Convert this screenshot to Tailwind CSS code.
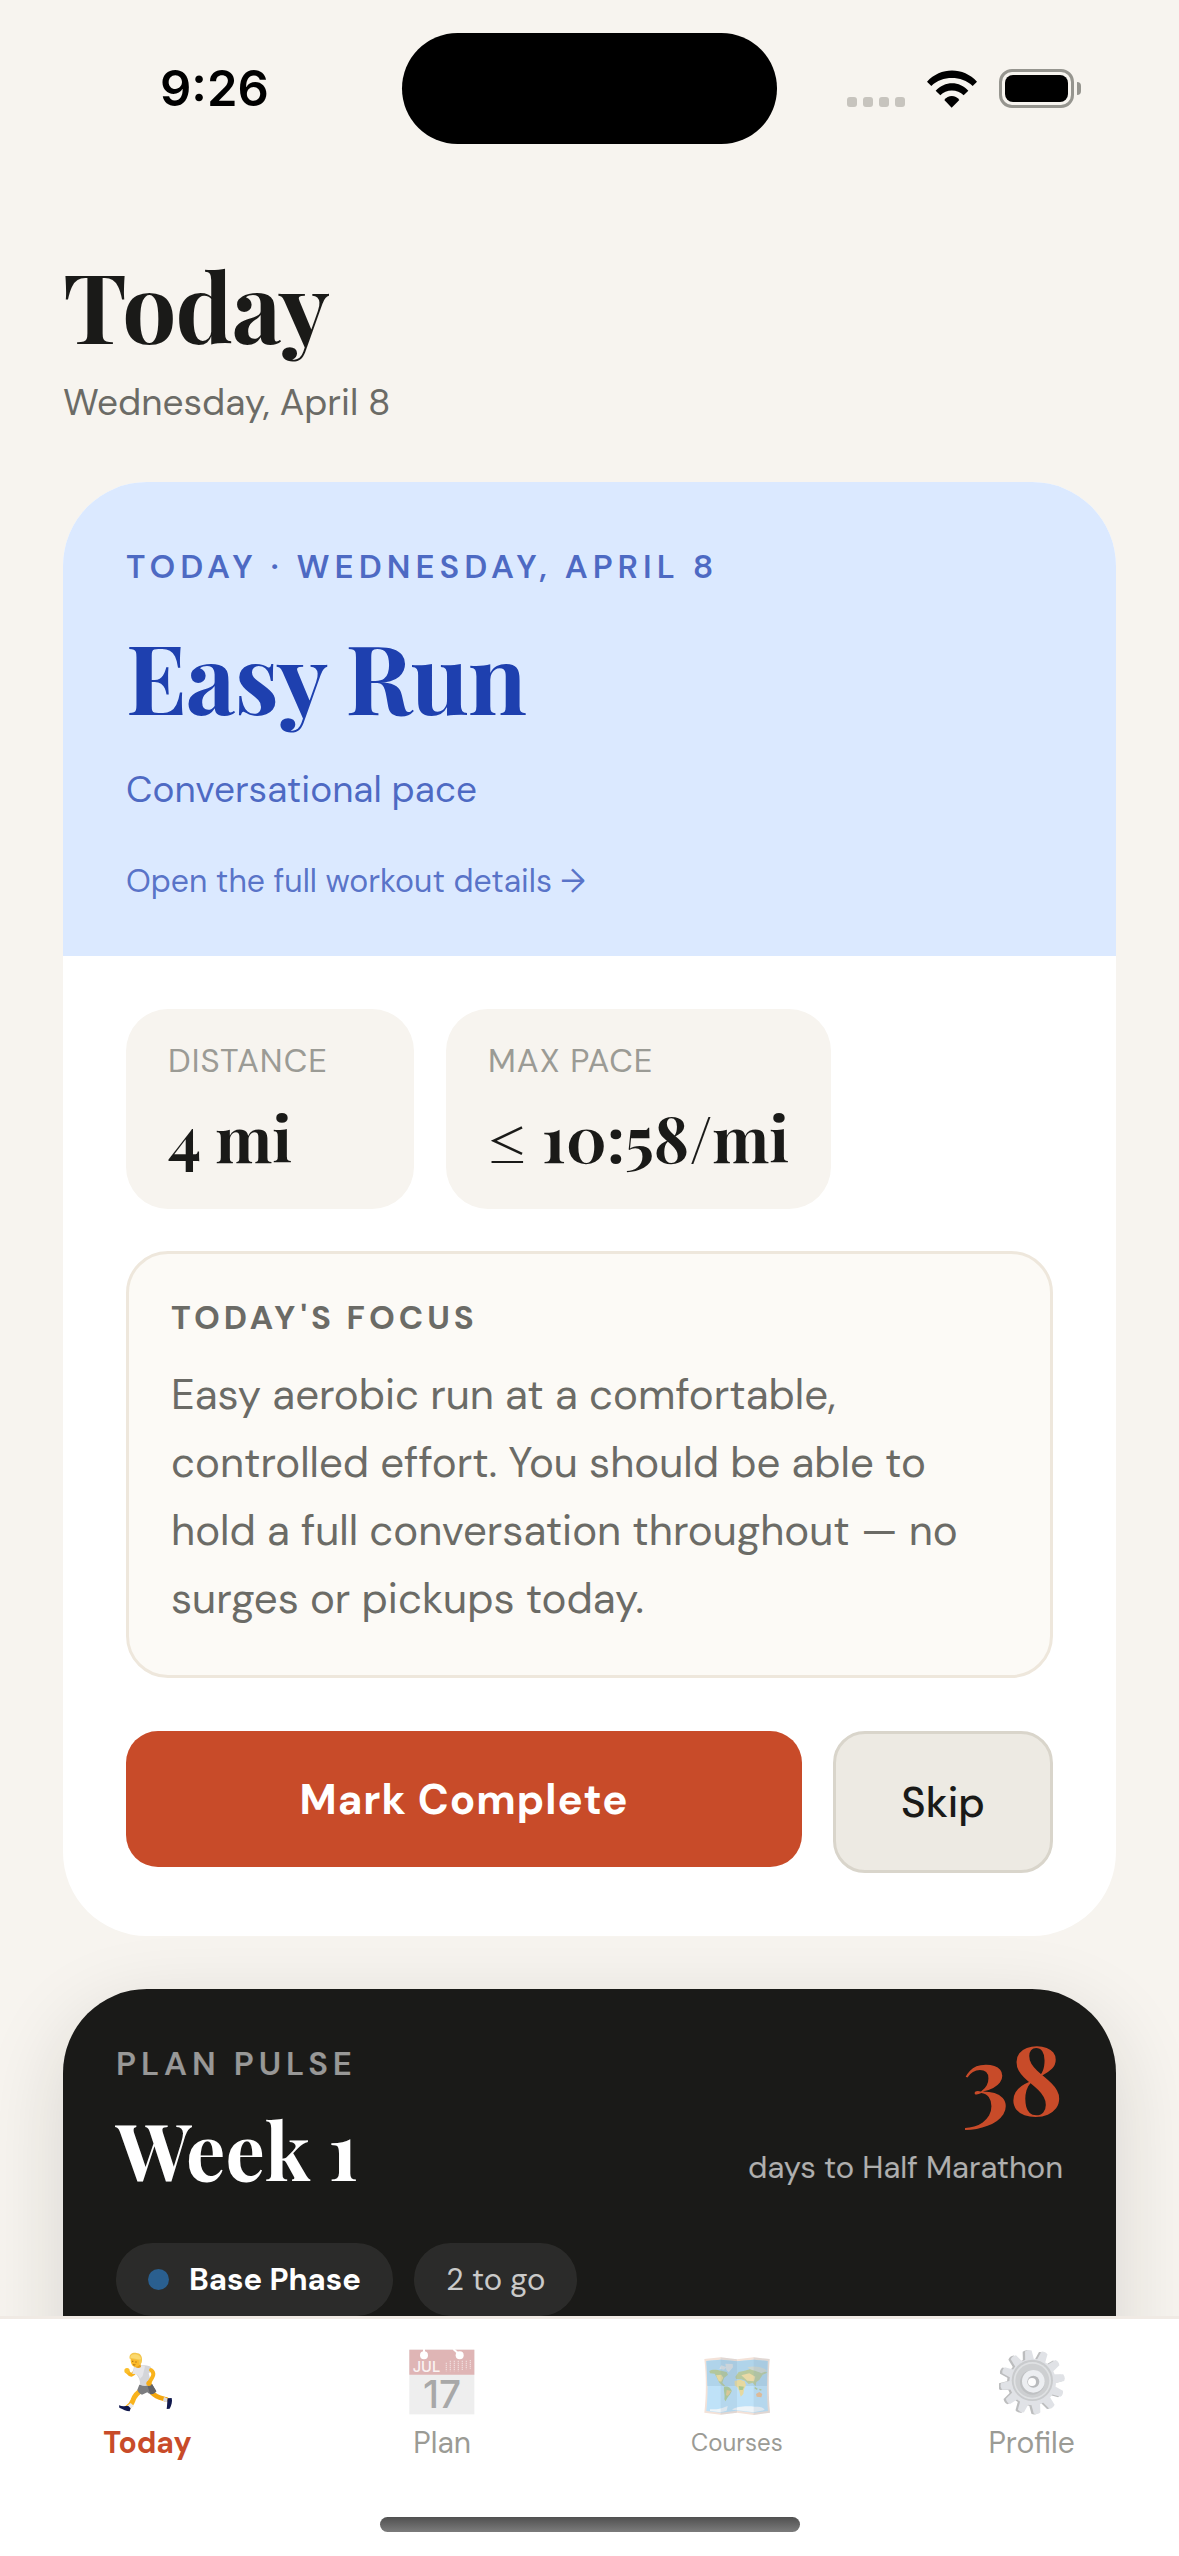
<!DOCTYPE html>
<html lang="en">
<head>
<meta charset="utf-8">
<meta name="viewport" content="width=device-width, initial-scale=1">
<title>Today</title>
<script src="https://cdn.jsdelivr.net/npm/@tailwindcss/browser@4"></script>
</head>
<body class="bg-[#f7f4ef] font-['DM_Sans','Lato',sans-serif] text-[#1a1a18]">
<div class="flex h-screen flex-col overflow-hidden">

  <!-- Status bar -->
  <header class="grid h-[177px] shrink-0 grid-cols-[1fr_375px_1fr] items-center text-black">
    <div class="pl-[160px] font-['Inter',sans-serif] text-[49px] leading-[60px] font-semibold">9:26</div>
    <div class="h-[111px] rounded-full bg-black"></div>
    <div class="flex items-center justify-end gap-[22px] pr-[98px]">
      <div class="flex h-[36px] items-end gap-[6px]">
        <span class="size-[10px] rounded-[3px] bg-[#c7c4be]"></span>
        <span class="size-[10px] rounded-[3px] bg-[#c7c4be]"></span>
        <span class="size-[10px] rounded-[3px] bg-[#c7c4be]"></span>
        <span class="size-[10px] rounded-[3px] bg-[#c7c4be]"></span>
      </div>
      <svg class="h-[38px] w-[50px]" viewBox="0 0 150 112" aria-hidden="true">
        <path d="M0 34C40-11 110-11 150 34L137 47C103 15 46 15 13 47Z"/>
        <path d="M26 61C53 31 98 31 124 61L110 75C92 56 57 56 40 75Z"/>
        <path d="M52 89C63 73 86 73 97 89L74 112Z"/>
      </svg>
      <div class="flex items-center gap-[3px]">
        <div class="h-[39px] w-[75px] rounded-[13px] border-3 border-[#96958f] p-[3px]">
          <div class="h-full rounded-[8px] bg-black"></div>
        </div>
        <div class="h-[13px] w-[4px] rounded-r-full bg-[#96958f]"></div>
      </div>
    </div>
  </header>

  <main class="min-h-0 flex-1 overflow-hidden px-[63px] pt-[64px]">
    <h1 class="font-['Playfair_Display','Liberation_Serif',serif] text-[96px] leading-[126px] font-bold tracking-[-1px]">Today</h1>
    <p class="mt-[10px] text-[37px] leading-[51px] text-[#6b6b66]">Wednesday, April 8</p>

    <!-- Workout card -->
    <section class="mt-[54px] overflow-hidden rounded-[84px] bg-white">
      <div class="bg-[#dbe9ff] px-[63px] pt-[63px] pb-[53px] text-[#1e40af]">
        <p class="text-[33px] leading-[43px] font-semibold tracking-[5px] text-[#1e40af]/75">TODAY · WEDNESDAY, APRIL 8</p>
        <h2 class="mt-[24px] font-['Playfair_Display','Liberation_Serif',serif] text-[96px] leading-[126px] font-bold tracking-[-1px]">Easy Run</h2>
        <p class="mt-[26px] text-[37px] leading-[51px] text-[#1e40af]/75">Conversational pace</p>
        <a href="#workout" class="mt-[45px] block text-[32px] leading-[43px] text-[#1e40af]/70">Open the full workout details →</a>
      </div>
      <div class="px-[63px] pt-[53px] pb-[63px]">
        <dl class="flex gap-[32px]">
          <div class="min-w-[288px] rounded-[42px] bg-[#f7f4ef] px-[42px] py-[30px]">
            <dt class="text-[33px] leading-[44px] tracking-[1px] text-[#9b9b95]">DISTANCE</dt>
            <dd class="mt-[12px] font-['Playfair_Display','Liberation_Serif',serif] text-[63px] leading-[84px] font-bold">4 mi</dd>
          </div>
          <div class="rounded-[42px] bg-[#f7f4ef] px-[42px] py-[30px]">
            <dt class="text-[33px] leading-[44px] tracking-[1px] text-[#9b9b95]">MAX PACE</dt>
            <dd class="mt-[12px] font-['Playfair_Display','Liberation_Serif',serif] text-[63px] leading-[84px] font-bold">≤ 10:58/mi</dd>
          </div>
        </dl>
        <div class="mt-[42px] rounded-[42px] border-3 border-[#eee7dc] bg-[#fcfaf6] p-[42px]">
          <h3 class="text-[33px] leading-[43px] font-bold tracking-[4px] text-[#6b6b66]">TODAY'S FOCUS</h3>
          <p class="mt-[22px] text-[42px] leading-[68px] text-[#6b6b66]">Easy aerobic run at a comfortable,<br>controlled effort. You should be able to<br>hold a full conversation throughout — no<br>surges or pickups today.</p>
        </div>
        <div class="mt-[53px] flex items-start gap-[31px]">
          <button type="button" class="h-[136px] flex-1 rounded-[32px] bg-[#c84b29] text-[42px] font-bold tracking-[1px] text-white">Mark Complete</button>
          <button type="button" class="h-[142px] w-[220px] rounded-[32px] border-3 border-[#d9d5cb] bg-[#edeae3] text-[42px] font-medium">Skip</button>
        </div>
      </div>
    </section>

    <!-- Plan pulse card -->
    <section class="mt-[53px] rounded-[84px] bg-[#1a1a18] p-[53px] shadow-[0_24px_84px_rgba(26,26,24,0.14)]">
      <div class="flex justify-between">
        <div>
          <p class="text-[33px] leading-[43px] font-semibold tracking-[5px] text-white/55">PLAN PULSE</p>
          <h2 class="mt-[12px] font-['Playfair_Display','Liberation_Serif',serif] text-[78px] leading-[104px] font-bold text-white">Week 1</h2>
        </div>
        <div class="text-right">
          <p class="font-['Playfair_Display','Liberation_Serif',serif] text-[96px] leading-[68px] font-bold text-[#c84b29]">38</p>
          <p class="mt-[36px] text-[31px] leading-[43px] text-white/65">days to Half Marathon</p>
        </div>
      </div>
      <div class="mt-[42px] flex gap-[21px] text-[31px] leading-[43px]">
        <span class="flex items-center gap-[20px] rounded-full bg-white/8 px-[32px] py-[15px] font-bold text-white"><i class="size-[21px] rounded-full bg-[#2a5f8f]"></i>Base Phase</span>
        <span class="rounded-full bg-white/8 px-[32px] py-[15px] text-white/75">2 to go</span>
      </div>
      <div class="h-[240px]"></div>
    </section>
  </main>

  <!-- Tab bar -->
  <nav class="shrink-0 border-t-3 border-[#f0eae4] bg-white pt-[29px] pb-[24px]">
    <div class="grid grid-cols-4 text-[30px] leading-[39px] text-[#9b9b95]">
      <a href="#today" class="flex flex-col items-center gap-[7px] font-bold text-[#c84b29]" aria-current="page">
        <svg class="h-[68px] w-[66px]" viewBox="162 114 198 204" aria-hidden="true">
          <path d="M246 240C228 250 222 262 219 271C214 284 210 288 202 293" fill="none" stroke="#f9b31c" stroke-width="15" stroke-linecap="round"/>
          <path d="M276 248C288 262 300 263 319 268" fill="none" stroke="#f4a70f" stroke-width="14" stroke-linecap="round"/>
          <path d="M212 279L222 288L210 296L202 287Z" fill="#e9e9ec"/>
          <path d="M312 261L324 266L320 277L309 272Z" fill="#dcdce0"/>
          <path d="M177 286C186 290 197 288 205 288L212 295L209 304C199 304 190 298 178 293Z" fill="#11194d"/>
          <path d="M323 265L335 264C338 274 334 287 329 296L320 297C322 287 321 276 323 265Z" fill="#11194d"/>
          <path d="M238 224L276 222L289 244C280 254 268 254 262 247L246 254C238 250 233 244 232 239Z" fill="#7c7d80"/>
          <path d="M262 225L276 222L289 244C283 251 277 254 270 252Z" fill="#626367"/>
          <path d="M226 184C218 195 213 199 203 186" fill="none" stroke="#f9b31c" stroke-width="12" stroke-linecap="round" stroke-linejoin="round"/>
          <circle cx="201" cy="182" r="8" fill="#fbbf2b"/>
          <path d="M222 171C236 164 258 164 272 170L276 184L266 190L274 223C262 229 250 229 240 224C241 211 236 201 229 193L217 191Z" fill="#d4d5d9"/>
          <path d="M224 172C236 166 247 167 255 169L248 198L240 206C237 199 233 195 229 192L217 191Z" fill="#e6e6ea"/>
          <path d="M273 180C286 190 279 200 268 217" fill="none" stroke="#f9b31c" stroke-width="12" stroke-linecap="round"/>
          <circle cx="267" cy="220" r="8" fill="#f6ac16"/>
          <path d="M224 158L241 158L243 171C236 176 228 174 223 169Z" fill="#e89c13"/>
          <path d="M212 143C211 158 215 169 226 171C237 171 243 162 244 147L232 138Z" fill="#fbb928"/>
          <path d="M209 146C206 133 218 127 229 129C241 129 248 139 246 153C245 162 240 165 237 164L236 150C228 150 218 147 209 146Z" fill="#f3c64c"/>
          <path d="M211 143C211 134 221 131 232 134C239 136 243 141 243 148C234 149 222 145 211 143Z" fill="#fbd96f"/>
          <path d="M216 154h4M226 156h4M219 164q4 2 7 0" stroke="#77430b" stroke-width="2" fill="none"/>
        </svg>
        <span>Today</span>
      </a>
      <a href="#plan" class="flex flex-col items-center gap-[7px]">
        <svg class="h-[68px] w-[66px]" viewBox="117 114 198 204" aria-hidden="true">
          <rect x="118" y="119" width="195" height="194" fill="#eeeeee"/>
          <path d="M118 119H313V194H118Z" fill="#dfb5b5"/>
          <circle cx="162" cy="136" r="12" fill="#fff"/><circle cx="269" cy="136" r="12" fill="#fff"/>
          <path d="M162 117V134M250 117L269 134" stroke="#fff" stroke-width="6"/>
          <text x="128" y="185" font-family="Inter, sans-serif" font-size="44" font-weight="500" fill="#faf3f3">JUL</text>
          <path d="M229 158V184M241 152V184M253 152V184M265 152V184M277 152V180M289 152V178M301 150V176" stroke="#efd9d9" stroke-width="4" stroke-dasharray="4 2"/>
          <text x="216" y="294" text-anchor="middle" font-family="Inter, sans-serif" font-size="116" font-weight="500" fill="#a8a8a8">17</text>
        </svg>
        <span>Plan</span>
      </a>
      <a href="#courses" class="flex flex-col items-center gap-[7px]">
        <svg class="h-[68px] w-[66px]" viewBox="132 114 198 204" aria-hidden="true">
          <path d="M133 147L182 142L231 148L281 142L329 147C325 200 325 260 330 308L281 315L231 308L182 314L133 308C139 255 139 200 133 147Z" fill="#f3e2d8"/>
          <path d="M139 153L182 149L231 154L281 149L323 153C320 200 320 260 324 303L281 308L231 302L182 308L139 303C144 255 144 200 139 153Z" fill="#bfe2f8"/>
          <path d="M139 153L182 149L231 154L281 149L323 153L321 228H142Z" fill="#b0d4ea"/>
          <path d="M148 183C158 176 172 180 184 182L200 186L204 194L192 204L187 218L196 228L190 229L178 218L170 202L164 191L150 190Z" fill="#b3c79c"/>
          <path d="M168 196L184 194L190 203L184 215L176 213Z" fill="#e6d9a0"/>
          <path d="M184 166L200 172L192 179L178 176ZM196 161L218 162L219 172L206 187L199 180Z" fill="#d9dfe2"/>
          <path d="M192 231C201 227 214 234 215 243C212 254 202 260 197 274L193 268C196 254 190 244 192 231Z" fill="#b0cc95"/>
          <path d="M200 240L214 243L204 257L198 256Z" fill="#e9cf90"/>
          <path d="M226 200L236 186L254 182L274 176L304 178L322 188L308 194L298 210L289 216L287 229L278 218L266 222L256 212L244 208L228 207Z" fill="#b8c99e"/>
          <path d="M244 196L268 190L286 200L282 214L262 212Z" fill="#ead9a6"/>
          <path d="M262 172C282 166 308 170 321 182L304 190C290 182 272 182 262 172Z" fill="#cdd6d0"/>
          <path d="M224 213L240 209L254 214L258 226L252 238L250 252L242 260L238 244L232 232L224 226Z" fill="#e6d9a0"/>
          <path d="M236 228L252 230L248 240L238 240Z" fill="#acc88f"/>
          <path d="M288 252L298 246L307 252L304 262L290 260Z" fill="#eebf92"/>
          <path d="M284 233L292 238M298 238L304 240" stroke="#b0cc95" stroke-width="4"/>
          <path d="M150 298C168 298 180 298 203 288L200 302L182 307L150 303ZM216 299C230 288 262 288 284 290C304 290 310 292 314 300L281 307L231 301Z" fill="#eef5f9"/>
          <path d="M182 142L231 148V308L182 314ZM281 142L329 147C325 200 325 260 330 308L281 315Z" fill="#8aa9bd" opacity=".18"/>
        </svg>
        <span class="text-[24px]">Courses</span>
      </a>
      <a href="#profile" class="flex flex-col items-center gap-[7px]">
        <svg class="h-[68px] w-[66px]" viewBox="146 114 198 204" aria-hidden="true">
          <defs>
            <g id="teeth">
              <path id="tooth" d="M231 156L235 122Q245 116 255 122L259 156Z"/>
              <use href="#tooth" transform="rotate(30 245 216)"/><use href="#tooth" transform="rotate(60 245 216)"/>
              <use href="#tooth" transform="rotate(90 245 216)"/><use href="#tooth" transform="rotate(120 245 216)"/>
              <use href="#tooth" transform="rotate(150 245 216)"/><use href="#tooth" transform="rotate(180 245 216)"/>
              <use href="#tooth" transform="rotate(210 245 216)"/><use href="#tooth" transform="rotate(240 245 216)"/>
              <use href="#tooth" transform="rotate(270 245 216)"/><use href="#tooth" transform="rotate(300 245 216)"/>
              <use href="#tooth" transform="rotate(330 245 216)"/>
              <circle cx="245" cy="216" r="70"/>
            </g>
          </defs>
          <g transform="translate(-5 1) rotate(-8 245 216)" fill="#bcbdbe"><use href="#teeth"/></g>
          <g transform="translate(2 0) rotate(-8 245 216)" fill="#e0e2e6"><use href="#teeth"/></g>
          <circle cx="246" cy="211" r="62" fill="#c9cbcd"/>
          <circle cx="246" cy="212" r="56" fill="#dfe1e3"/>
          <circle cx="246" cy="212" r="51" fill="#cdcfd1"/>
          <circle cx="246" cy="217" r="37" fill="#bfc1c3"/>
          <circle cx="249" cy="214" r="34" fill="#eceef1"/>
          <circle cx="249" cy="215" r="18" fill="#b8babc"/>
          <circle cx="245" cy="216" r="12" fill="#fdfdfd"/>
        </svg>
        <span>Profile</span>
      </a>
    </div>
    <div class="mx-auto mt-[55px] h-[15px] w-[420px] rounded-full bg-linear-to-b from-[#505050] to-[#7c7c7c]"></div>
  </nav>
</div>
</body>
</html>
